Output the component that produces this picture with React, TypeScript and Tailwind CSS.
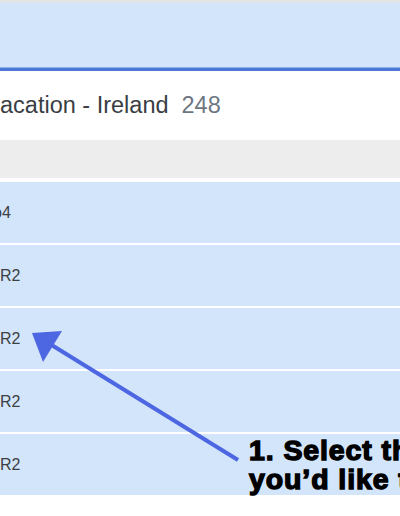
export default function App() {
  const rows = ["o4", "R2", "R2", "R2", "R2"];
  return (
    <div className="relative w-[400px] h-[516px] overflow-hidden bg-white font-['Liberation_Sans',Arial,sans-serif]">
      {/* TOP BAR */}
      <div className="h-[3px] bg-[#e3e4e6]" />
      <div className="h-[64px] bg-[#d3e5fb]" />
      <div className="h-[1px] bg-[#8fb0ea]" />
      <div className="h-[3px] bg-[#4a78d6]" />
      {/* ALBUM TITLE */}
      <div className="h-[69px] flex items-center whitespace-nowrap text-[23.5px] pt-[1px]">
        <span className="text-[#3a3e44]">acation - Ireland</span>
        <span className="ml-[13px] text-[#6e7682]">248</span>
      </div>
      {/* GRAY HEADER */}
      <div className="h-[38px] bg-[#ededed]" />
      <div className="h-[4px]" />
      {/* ROWS */}
      <div className="flex flex-col gap-[2px]">
        {rows.map((r, i) => (
          <div key={i} className="h-[61px] bg-[#d3e5fb] flex items-center overflow-hidden">
            <span className={`text-[16px] text-[#3c4043] whitespace-nowrap ${i === 0 ? "ml-[-7px]" : "ml-0"}`}>
              {r}
            </span>
          </div>
        ))}
      </div>
      {/* ARROW */}
      <svg className="absolute inset-0" width="400" height="516" viewBox="0 0 400 516">
        <line x1="238" y1="460" x2="50" y2="344" stroke="#4d66e2" strokeWidth="4" />
        <polygon points="32,333 62,331 43,362" fill="#4d66e2" />
      </svg>
      {/* ANNOTATION */}
      <div className="absolute left-[249px] top-[436px] whitespace-nowrap text-[28.5px] leading-[29px] tracking-[0.9px] font-bold text-black [-webkit-text-stroke:1.4px_black]">
        <div>1. Select the album</div>
        <div>you’d like to download</div>
      </div>
    </div>
  );
}
